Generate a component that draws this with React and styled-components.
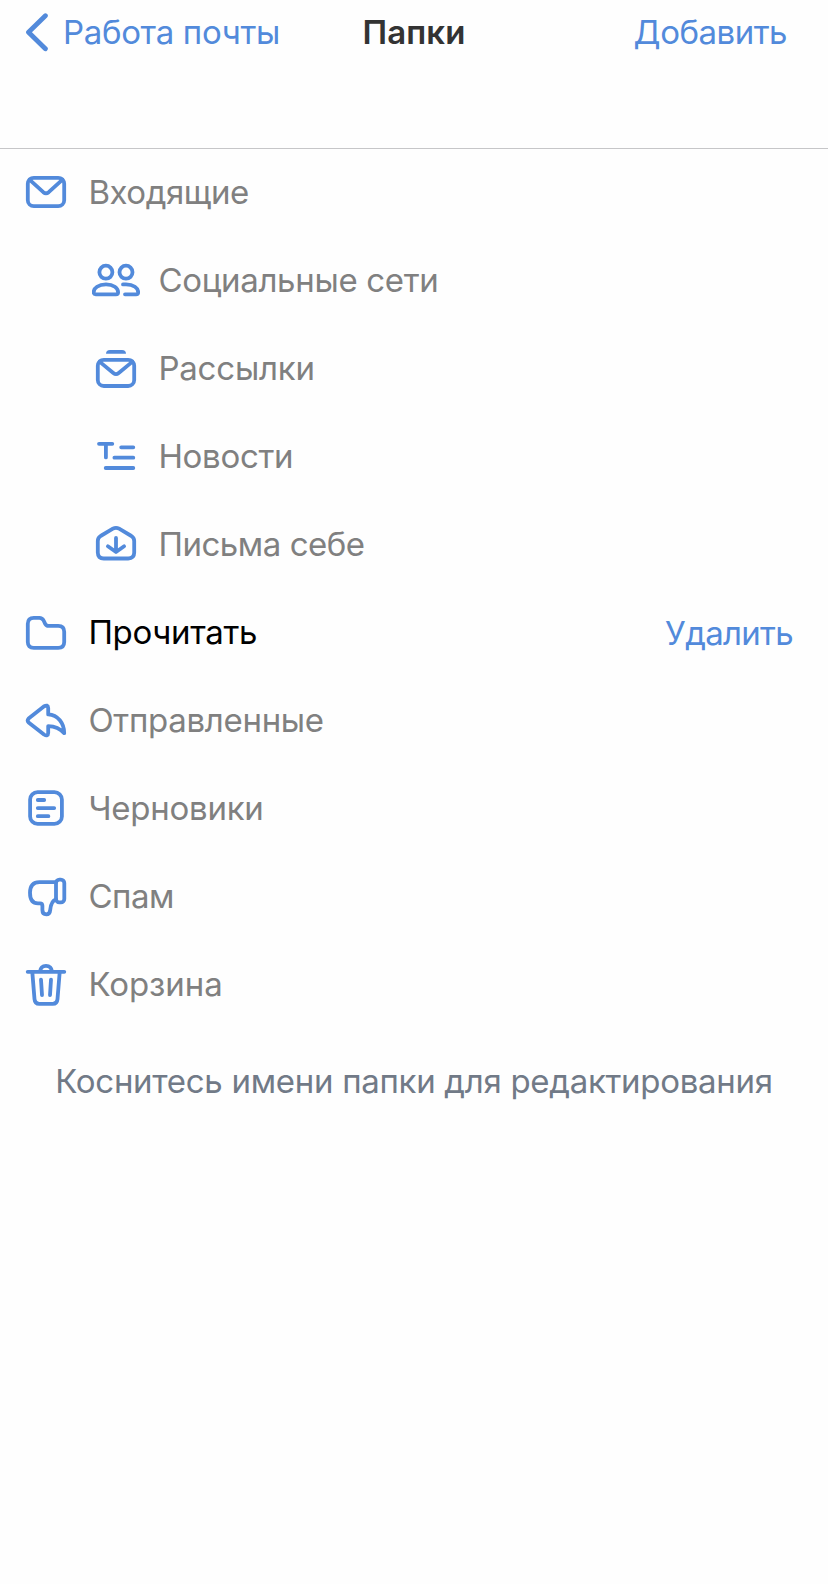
import React from "react";
import styled, { createGlobalStyle } from "styled-components";

const BLUE = "#528adb";

const GlobalStyle = createGlobalStyle`
  *, *::before, *::after { box-sizing: border-box; }
  body {
    margin: 0;
    background: #fefefe;
    font-family: Inter, "Liberation Sans", sans-serif;
    font-size: 33px;
    line-height: 40px;
  }
  button {
    margin: 0;
    padding: 0;
    border: 0;
    background: none;
    font: inherit;
    cursor: pointer;
  }
`;

const Screen = styled.div`
  min-height: 1584px;
  display: flex;
  flex-direction: column;
`;

const NavBar = styled.header`
  height: 149px;
  padding: 12px 26px 0;
  display: grid;
  grid-template-columns: 1fr auto 1fr;
  align-items: start;
  border-bottom: 1px solid #c6c6c8;
`;

const NavButton = styled.button`
  display: flex;
  align-items: center;
  color: ${BLUE};
  white-space: nowrap;
  letter-spacing: ${(p) => p.$tracking}px;
  justify-self: ${(p) => (p.$end ? "end" : "start")};
  margin-right: ${(p) => (p.$end ? 15 : 0)}px;
`;

const Chevron = styled.svg`
  width: 24px;
  height: 40px;
  margin-right: 13px;
  fill: none;
  stroke: currentColor;
  stroke-width: 4.8;
  stroke-linecap: round;
  stroke-linejoin: round;
`;

const Title = styled.h1`
  margin: 0;
  font-size: inherit;
  font-weight: 600;
  color: #333;
  letter-spacing: 0.1px;
`;

const FolderList = styled.ul`
  margin: -1px 0 0;
  padding: 0;
  list-style: none;
`;

const FolderRow = styled.li`
  height: 88px;
  padding-right: 35px;
  padding-left: ${(p) => (p.$nested ? 92 : 22)}px;
  display: flex;
  align-items: center;
`;

const FolderIcon = styled.svg`
  flex: none;
  width: 48px;
  height: 48px;
  margin-right: 18.4px;
  fill: none;
  stroke: ${BLUE};
  stroke-width: 3.8;
  stroke-linecap: round;
  stroke-linejoin: round;
`;

const FolderName = styled.span`
  flex: 1;
  color: ${(p) => (p.$editable ? "#000" : "#808080")};
  letter-spacing: ${(p) => p.$tracking}px;
`;

const DeleteButton = styled.button`
  padding-top: 2px;
  color: ${BLUE};
  letter-spacing: -0.7px;
`;

const Hint = styled.p`
  margin: 33px 0 0;
  text-align: center;
  white-space: nowrap;
  color: #717a87;
  letter-spacing: -0.3px;
`;

const icons = {
  inbox: (
    <>
      <rect x="5.8" y="9.8" width="36.4" height="28.4" rx="6" />
      <path d="M7.5 11.6 21.3 24.2Q24 26.4 26.7 24.2L40.5 11.6" />
    </>
  ),
  social: (
    <>
      <circle cx="13.9" cy="16.2" r="6.5" />
      <circle cx="34" cy="16.2" r="6.5" />
      <path d="M14 28.4C6.5 28.4 1.7 32 1.7 36.2Q1.7 38.3 3.8 38.3H24Q26.1 38.3 26.1 36.2C26.1 32 21.5 28.4 14 28.4Z" />
      <path d="M31 28.4H34C41.5 28.4 46.2 32 46.2 36.2Q46.2 38.3 44.1 38.3H33" />
    </>
  ),
  mailing: (
    <>
      <path d="M14 9.8Q14 6 18 6H30Q34 6 34 9.8Z" fill={BLUE} stroke="none" />
      <rect x="5.8" y="15.8" width="36.4" height="26.2" rx="6" />
      <path d="M7.5 17.6 21.3 29Q24 31.2 26.7 29L40.5 17.6" />
    </>
  ),
  news: <path d="M7 11.8H20.3M13.9 11.8V25.4M29.2 15.3H41.3M22.4 25.7H41.3M13.7 36H41.3" />,
  self: (
    <>
      <path d="M5.8 21Q5.8 17.8 8.6 16L20.9 8.7Q24 6.9 27.1 8.7L39.4 16Q42.2 17.8 42.2 21V32.6Q42.2 38.5 36.2 38.5H11.8Q5.8 38.5 5.8 32.6Z" />
      <path d="M24 18V31.5M15.9 26.3 24 32 32.1 26.3" />
    </>
  ),
  folder: (
    <path d="M5.8 15.8Q5.8 9.8 11.8 9.8H17.4Q20.2 9.8 21.6 12.5L23.2 15.8Q24.2 17.8 26.6 17.8H36.2Q42.2 17.8 42.2 23.8V34Q42.2 39.8 36.2 39.8H11.8Q5.8 39.8 5.8 34Z" />
  ),
  sent: (
    <path d="M6.6 22.4 21.8 10.5Q26 8 26.2 12V18.4C36 18.8 42.2 27.5 42.2 37.2C38.5 33 33 30.3 26.2 30.1V36.8Q26 41 22 38.5L6.6 26.4Q4.8 24.4 6.6 22.4Z" />
  ),
  drafts: (
    <>
      <rect x="8.1" y="8.1" width="31.8" height="31.8" rx="7.5" />
      <path d="M15.8 16H22.2M15.8 24.1H32.2M15.8 32.2H26.4" />
    </>
  ),
  spam: (
    <>
      <rect x="34" y="7.7" width="8.3" height="22.6" rx="3.4" />
      <path d="M34 10.1H17.5C10.5 10.1 8 14 8 20.8C8 28 10.5 31.4 16 31.4H18Q20.4 31.4 20.4 33.8V38C20.4 41 22 42.3 24.3 42.3C26.6 42.3 28 40.6 28.2 38C28.7 33 30 28.6 34 27.4" />
    </>
  ),
  trash: (
    <>
      <path d="M5.7 11.8H42.3M17.9 11.8C18.4 7.7 20.8 5.8 24 5.8S29.6 7.7 30.1 11.8" />
      <path d="M10.3 12 12.5 39Q12.9 43.8 17.2 43.8H30.8Q35.1 43.8 35.5 39L37.7 12" />
      <path d="M19 19.6 20 35.2M29 19.6 28 35.2" />
    </>
  ),
};

const folders = [
  { icon: "inbox", name: "Входящие", tracking: -0.45 },
  { icon: "social", name: "Социальные сети", tracking: -0.32, nested: true },
  { icon: "mailing", name: "Рассылки", tracking: -0.2, nested: true },
  { icon: "news", name: "Новости", tracking: -0.3, nested: true },
  { icon: "self", name: "Письма себе", tracking: -0.47, nested: true },
  { icon: "folder", name: "Прочитать", tracking: -0.32, editable: true },
  { icon: "sent", name: "Отправленные", tracking: -0.3 },
  { icon: "drafts", name: "Черновики", tracking: -0.25 },
  { icon: "spam", name: "Спам", tracking: -0.5 },
  { icon: "trash", name: "Корзина", tracking: -0.05 },
];

export default function App() {
  return (
    <>
      <GlobalStyle />
      <Screen>
        <NavBar>
          <NavButton $tracking={-0.33}>
            <Chevron viewBox="0 0 24 40">
              <path d="M19.4 3.7 2.5 20.2 19.4 36.8" />
            </Chevron>
            Работа почты
          </NavButton>
          <Title>Папки</Title>
          <NavButton $tracking={-0.5} $end>
            Добавить
          </NavButton>
        </NavBar>
        <FolderList>
          {folders.map((f) => (
            <FolderRow key={f.name} $nested={f.nested}>
              <FolderIcon viewBox="0 0 48 48">{icons[f.icon]}</FolderIcon>
              <FolderName $editable={f.editable} $tracking={f.tracking}>
                {f.name}
              </FolderName>
              {f.editable && <DeleteButton>Удалить</DeleteButton>}
            </FolderRow>
          ))}
        </FolderList>
        <Hint>Коснитесь имени папки для редактирования</Hint>
      </Screen>
    </>
  );
}
